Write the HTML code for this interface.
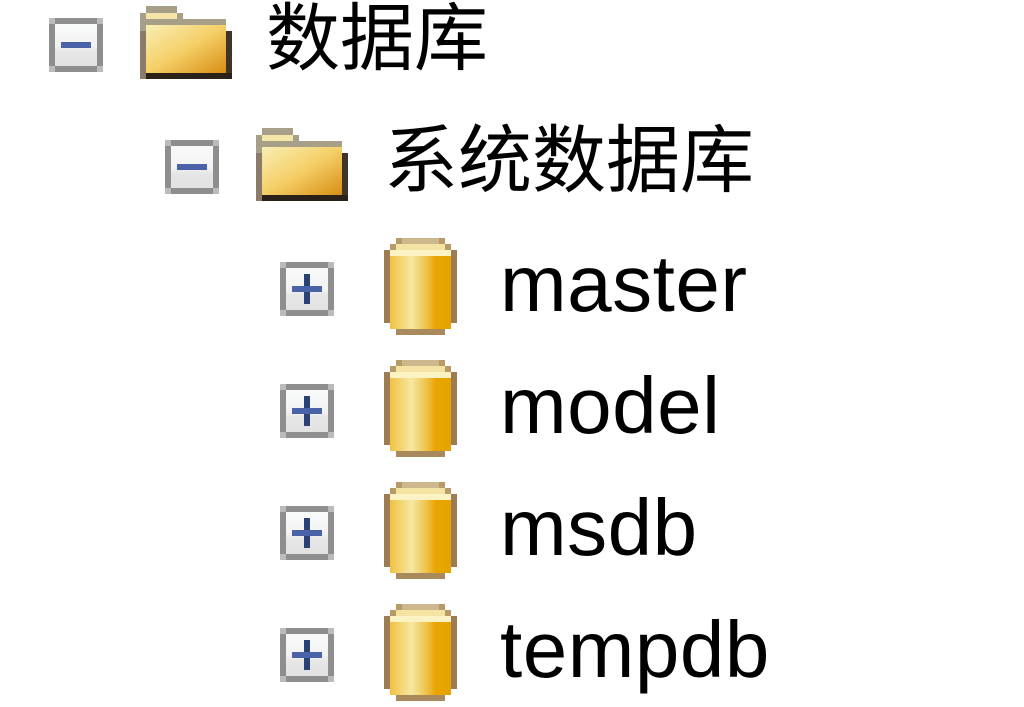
<!DOCTYPE html>
<html><head><meta charset="utf-8"><style>
body{margin:0;width:1024px;height:707px;background:#fff;position:relative;overflow:hidden}
.box{position:absolute;width:54px;height:54px}
.t{position:absolute;font-family:"Liberation Sans","Noto Sans CJK SC",sans-serif;color:#000;white-space:nowrap;line-height:1}
.cn{font-size:74px}
.en{font-size:80px;letter-spacing:0.5px}
</style></head><body>
<svg width="0" height="0" style="position:absolute">
<defs>
<linearGradient id="bx" x1="0" y1="0" x2="0" y2="1"><stop offset="0" stop-color="#f9fafa"/><stop offset=".5" stop-color="#f3f3f3"/><stop offset=".65" stop-color="#e6e6e6"/><stop offset="1" stop-color="#e2e2e2"/></linearGradient>
<linearGradient id="fd" x1="0" y1="0" x2="1" y2="1"><stop offset="0" stop-color="#f8eeb4"/><stop offset=".5" stop-color="#f5cf67"/><stop offset="1" stop-color="#d78e14"/></linearGradient>
<linearGradient id="cy" x1="0" y1="0" x2="1" y2="0"><stop offset="0" stop-color="#f0c141"/><stop offset=".35" stop-color="#f6e7a2"/><stop offset=".6" stop-color="#efc24a"/><stop offset=".75" stop-color="#e9a400"/><stop offset="1" stop-color="#e6a300"/></linearGradient>
<g id="minus"><rect x="0" y="0" width="54" height="54" fill="#8e8e8e"/><rect x="0" y="0" width="6" height="6" fill="#bbb"/><rect x="48" y="0" width="6" height="6" fill="#bbb"/><rect x="0" y="48" width="6" height="6" fill="#bbb"/><rect x="48" y="48" width="6" height="6" fill="#bbb"/><rect x="6" y="6" width="42" height="42" fill="url(#bx)"/><rect x="12" y="24" width="30" height="6" fill="#4a62a8"/></g>
<g id="plus"><use href="#minus"/><rect x="24" y="12" width="6" height="30" fill="#2a4173"/><rect x="12" y="24" width="30" height="6" fill="#4a62a8"/></g>
<g id="folder"><rect x="6" y="0" width="31" height="7" fill="#a89f89"/><rect x="0" y="7" width="43" height="6" fill="#a89f89"/><rect x="6" y="7" width="31" height="6" fill="#f3e6a8"/><rect x="0" y="13" width="86" height="12" fill="#a89f89"/><rect x="0" y="25" width="92" height="48" fill="#8a7c68"/><rect x="6" y="19" width="80" height="48" fill="url(#fd)"/><rect x="86" y="25" width="6" height="48" fill="#403428"/><rect x="6" y="67" width="86" height="6" fill="#2a2218"/></g>
<g id="cyl"><rect x="0" y="12" width="73" height="73" fill="#9c7c50"/><rect x="6" y="6" width="61" height="85" fill="#b89a66"/><rect x="12" y="0" width="49" height="97" fill="#b89a66"/><rect x="6" y="12" width="61" height="79" fill="url(#cy)"/><rect x="6" y="12" width="61" height="6" fill="#fbf3c4"/><rect x="12" y="6" width="49" height="6" fill="#f3e4a4"/><rect x="18" y="0" width="37" height="6" fill="#cdb88e"/><rect x="12" y="91" width="49" height="6" fill="#a88a5c"/></g>
</defs></svg>

<svg class="box" style="left:49px;top:18px"><use href="#minus"/></svg>
<svg style="position:absolute;left:140px;top:6px" width="92" height="73"><use href="#folder"/></svg>
<div class="t cn" style="left:266px;top:2px">数据库</div>

<svg class="box" style="left:165px;top:140px"><use href="#minus"/></svg>
<svg style="position:absolute;left:256px;top:128px" width="92" height="73"><use href="#folder"/></svg>
<div class="t cn" style="left:384px;top:124px">系统数据库</div>

<svg class="box" style="left:280px;top:262px"><use href="#plus"/></svg>
<svg style="position:absolute;left:384px;top:238px" width="73" height="97"><use href="#cyl"/></svg>
<div class="t en" style="left:500px;top:244px">master</div>

<svg class="box" style="left:280px;top:384px"><use href="#plus"/></svg>
<svg style="position:absolute;left:384px;top:360px" width="73" height="97"><use href="#cyl"/></svg>
<div class="t en" style="left:500px;top:366px">model</div>

<svg class="box" style="left:280px;top:506px"><use href="#plus"/></svg>
<svg style="position:absolute;left:384px;top:482px" width="73" height="97"><use href="#cyl"/></svg>
<div class="t en" style="left:500px;top:488px">msdb</div>

<svg class="box" style="left:280px;top:628px"><use href="#plus"/></svg>
<svg style="position:absolute;left:384px;top:604px" width="73" height="97"><use href="#cyl"/></svg>
<div class="t en" style="left:500px;top:610px">tempdb</div>
</body></html>
